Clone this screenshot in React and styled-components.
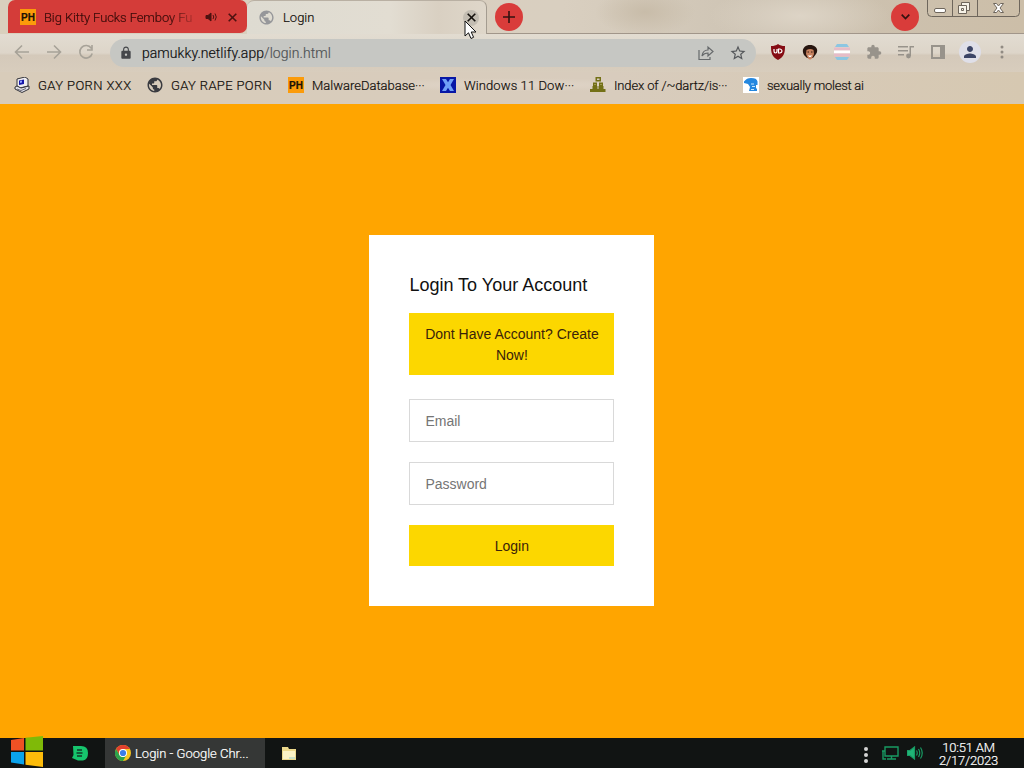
import React from 'react'
import styled, { createGlobalStyle } from 'styled-components';
import { MdLock, MdStarBorder, MdExtension, MdPerson, MdPublic } from 'react-icons/md';

const bookmarks = [
    { icon: 'pc', label: 'GAY PORN XXX', width: 133, spacing: 0.4 },
    { icon: 'globe', label: 'GAY RAPE PORN', width: 141, spacing: 0.35 },
    { icon: 'ph', label: 'MalwareDatabase···', width: 152, spacing: 0 },
    { icon: 'x', label: 'Windows 11 Dow···', width: 150, spacing: 0.1 },
    { icon: 'people', label: 'Index of /~dartz/is···', width: 153, spacing: -0.15 },
    { icon: 'blue', label: 'sexually molest ai', width: 140, spacing: -0.25 },
];

const PhIcon = () => (
    <PhBadge>PH</PhBadge>
)

const CloseIcon = () => (
    <svg width="9" height="9" viewBox="0 0 9 9" stroke="currentColor" strokeWidth="1.600">
        <path d="M.700.700l7.600 7.600M8.300.700L.700 8.300" />
    </svg>
)

const BookmarkIcon = ({ name }) => {
    if (name === 'ph') {
        return <PhIcon />
    }
    if (name === 'globe') {
        return <Globe size={18} color="#3a3b40" />
    }
    if (name === 'pc') {
        return (
            <svg width="16" height="16" viewBox="0 0 16 16">
                <path d="M3 2l8-2 3 2v7l-8 2-3-2z" fill="#eeedf0" stroke="#33333a" />
                <path d="M5 3.5l5-1v4.5l-5 1z" fill="#1717a8" />
                <path d="M6 4l2-.4v2L6 6z" fill="#8fa2ff" />
                <path d="M1 10l2-1 4 2 8-2v3l-7 3.5L1 12z" fill="#e2e1e8" stroke="#33333a" />
                <path d="M3 12l4 1.5 5-2" fill="none" stroke="#6a6a75" />
            </svg>
        )
    }
    if (name === 'x') {
        return (
            <svg width="16" height="16" viewBox="0 0 16 16">
                <path d="M0 0h16v16H0z" fill="#0717a6" />
                <path d="M2 2h4l2 3.200L10 2h4l-3.500 6 3.500 6h-4l-2-3.200L6 14H2l3.500-6z" fill="#6fa0f8" />
            </svg>
        )
    }
    if (name === 'people') {
        return (
            <svg width="16" height="16" viewBox="0 0 16 16" fill="#737016">
                <path d="M5.500 0H11v4.500H5.500z M7 1.500V3h2.500V1.500z" fillRule="evenodd" />
                <path d="M3 5.500h4V9h.5v3h1V9H9V5.500h4V9h.5v3h2v3H0v-3h2.500V9H3z" />
                <path d="M4.500 7h1v1h-1zM10.500 7h1v1h-1z" fill="#c9bf86" />
            </svg>
        )
    }
    return (
        <svg width="16" height="16" viewBox="0 0 16 16">
            <path d="M0 0h16v16H0z" fill="#fff" />
            <path d="M1 4.500C3 2 5 1 8 1c4 0 6 1 6.500 3.500V8H13v3l1 1v2H6l1-4-2-3-4-1z" fill="#2487df" />
            <path d="M8 6.500h3v1H8zM9 9h3v1H9zM8 12h3v1H8z" fill="#c7e8ff" />
        </svg>
    )
}

const Browser = () => (
    <Chrome>
        <TabStrip>
            <PlayingTab>
                <PhIcon />
                <PlayingTitle>Big Kitty Fucks Femboy Fu</PlayingTitle>
                <svg width="13" height="10" viewBox="0 0 13 10" fill="none" stroke="#4d1210">
                    <path d="M1 3.500h2L6 1v8L3 6.500H1z" fill="#4d1210" />
                    <path d="M8 3q1.500 2 0 4M10 1.500q2.500 3.500 0 7" />
                </svg>
                <CloseSlot><CloseIcon /></CloseSlot>
            </PlayingTab>
            <ActiveTab>
                <MdPublic size={17} color="#96979a" />
                <TabTitle>Login</TabTitle>
                <TabClose>
                    <CloseIcon />
                    <Cursor width="13" height="20" viewBox="0 0 13 20">
                        <path d="M1 1v15l3.500-3.200L7 18.500l2.600-1.200L7.200 12H12z" fill="#fff" stroke="#111" />
                    </Cursor>
                </TabClose>
            </ActiveTab>
            <StripRest>
                <RoundButton>
                    <svg width="12" height="12" viewBox="0 0 12 12" stroke="currentColor" strokeWidth="1.600">
                        <path d="M6 0v12M0 6h12" />
                    </svg>
                </RoundButton>
                <Spacer />
                <RoundButton>
                    <svg width="9" height="6" viewBox="0 0 9 6" fill="none" stroke="currentColor" strokeWidth="1.700">
                        <path d="M.700.700l3.800 3.800L8.300.700" />
                    </svg>
                </RoundButton>
                <WindowButtons>
                    <svg width="93" height="17" viewBox="0 0 93 17" fill="none" stroke="#6e665c">
                        <path d="M.5 0v12.500q0 4 4 4h84q4 0 4-4V0M25.500 0v16M50.500 0v16" />
                        <rect x="7.500" y="8.500" width="11" height="4" rx="1.500" fill="#fff" />
                        <path d="M34.500 2.500h8v8h-8z" fill="#f6f2e8" />
                        <path d="M31.500 5.500h8v8h-8z" fill="#f6f2e8" />
                        <path d="M34.500 8.500h2v2h-2z" />
                        <path d="M66.500 3.500h3l2 2.500 2-2.500h3l-3.500 4.500 3.500 4.500h-3l-2-2.500-2 2.500h-3L70 8z" fill="#fff" />
                    </svg>
                </WindowButtons>
            </StripRest>
        </TabStrip>
        <Toolbar>
            <NavIcon viewBox="0 0 16 16"><path d="M15 8H2M8 1.500L1.500 8 8 14.500" /></NavIcon>
            <NavIcon viewBox="0 0 16 16"><path d="M1 8h13M8 1.500L14.500 8 8 14.500" /></NavIcon>
            <NavIcon viewBox="0 0 16 16"><path d="M13.300 4.200A6.300 6.300 0 1 0 14.200 9.500M14 1v5H9" /></NavIcon>
            <AddressBar>
                <MdLock size={14} color="#45474a" />
                <Url>pamukky.netlify.app<span>/login.html</span></Url>
                <Spacer />
                <svg width="16" height="16" viewBox="0 0 16 16" fill="none" stroke="#66696b" strokeWidth="1.200">
                    <path d="M1 5v9.500h11V12" />
                    <path d="M4 11c.500-4 2.500-6 6-6V2l5 4.500-5 4.500V8c-3 0-4.500.800-6 3z" />
                </svg>
                <MdStarBorder size={18} color="#55585b" />
            </AddressBar>
            <Extensions>
                <svg width="16" height="16" viewBox="0 0 16 16">
                    <path d="M8 0c2 1.500 4 2 7 2 0 7-1 11-7 14C2 13 1 9 1 2c3 0 5-.500 7-2z" fill="#850c14" />
                    <path d="M4 5v2q0 2 1.500 2T7 7V5M8.500 5v4h1.500q2-.500 2-2t-2-2z" fill="none" stroke="#fff" strokeWidth="1.200" />
                </svg>
                <svg width="16" height="16" viewBox="0 0 16 16">
                    <path d="M2 11C-1 6 2 1 8 1s9 5 6 9l-3 4H5z" fill="#27150f" />
                    <path d="M4.500 6q4-2 7 0l.500 4-2 4.500q-2 2-4 0L4 10z" fill="#c78260" />
                    <path d="M5.500 8H7M9 8h1.500" stroke="#3b1c13" />
                    <path d="M6 11q2 1 4 0l-1 2H7z" fill="#fff" />
                </svg>
                <svg width="16" height="16" viewBox="0 0 16 16">
                    <path d="M3 0h10l2 3H1z" fill="#8cc6e2" />
                    <path d="M0 3.500h16v3H0z" fill="#e6bcc8" />
                    <path d="M0 6.500h16v3H0z" fill="#fff" />
                    <path d="M0 9.500h16v3H0z" fill="#e6bcc8" />
                    <path d="M1 13h14l-2 3H3z" fill="#8cc6e2" />
                </svg>
                <MdExtension size={16} color="#98938b" />
                <svg width="16" height="14" viewBox="0 0 16 14" fill="#98938b">
                    <path d="M0 1h10v1.500H0zM0 5h10v1.500H0zM0 9h6v1.500H0zM11.500 1H16v1.500h-3V11h-1.500z" />
                    <circle cx="10.500" cy="11" r="2.400" />
                </svg>
                <svg width="16" height="14" viewBox="0 0 16 14" fill="#98938b">
                    <path d="M1 0h14v14H1zM3 2v10h7V2z" fillRule="evenodd" />
                </svg>
                <Avatar><MdPerson size={18} /></Avatar>
                <svg width="16" height="14" viewBox="0 0 16 14" fill="#918b83">
                    <circle cx="8" cy="2" r="1.500" /><circle cx="8" cy="7" r="1.500" /><circle cx="8" cy="12" r="1.500" />
                </svg>
            </Extensions>
        </Toolbar>
        <Bookmarks>
            {bookmarks.map((item) => (
                <Bookmark key={item.label} $width={item.width} $spacing={item.spacing}>
                    <BookmarkIcon name={item.icon} />
                    <span>{item.label}</span>
                </Bookmark>
            ))}
        </Bookmarks>
    </Chrome>
)

const LoginForm = () => (
    <Form onSubmit={(e) => e.preventDefault()}>
        <h1>Login To Your Account</h1>
        <Button type="button" $tall>Dont Have Account? Create Now!</Button>
        <input type="email" placeholder="Email" />
        <input type="password" placeholder="Password" />
        <Button type="submit">Login</Button>
    </Form>
)

const Taskbar = () => (
    <Bar>
        <Start viewBox="0 0 32 31">
            <path d="M0 4l13-2v12.500H0z" fill="#ef5124" />
            <path d="M14.500 1.800L32 0v14.500H14.500z" fill="#7fba08" />
            <path d="M0 16h13v12.500L0 26.500z" fill="#0ba3ec" />
            <path d="M14.500 16H32v15l-17.500-2.200z" fill="#fdbc0a" />
        </Start>
        <Pinned>
            <svg width="16" height="15" viewBox="0 0 16 15">
                <path d="M1 0h8q7 0 7 7t-5 7.500H6L0 12l1.500-3z" fill="#16c56d" />
                <path d="M5 4h5M4.500 7h6M5 10h5" stroke="#123a27" strokeWidth="1.300" />
            </svg>
        </Pinned>
        <Task>
            <svg width="16" height="16" viewBox="0 0 16 16">
                <circle cx="8" cy="8" r="8" fill="#f7c51e" />
                <path d="M1.070 4A8 8 0 0 1 14.930 4H8a4 4 0 0 0-3.500 6z" fill="#e2402e" />
                <path d="M1.070 4A8 8 0 0 0 8 16l3.500-6a4 4 0 0 1-7 0z" fill="#2ba24c" />
                <circle cx="8" cy="8" r="4" fill="#fff" />
                <circle cx="8" cy="8" r="3.100" fill="#3b7de9" />
            </svg>
            <span>Login - Google Chr...</span>
        </Task>
        <Folder width="14" height="13" viewBox="0 0 14 13">
            <path d="M0 0h6l1 2h7v11H0z" fill="#ecd98c" />
            <path d="M1 4h12v8H1z" fill="#fbf3c7" />
            <path d="M7 10h6v2H7z" fill="#c9e0c8" />
        </Folder>
        <Spacer />
        <Tray>
            <svg width="4" height="18" viewBox="0 0 4 18" fill="#d4d4d4">
                <circle cx="2" cy="3" r="2" /><circle cx="2" cy="9" r="2" /><circle cx="2" cy="15" r="2" />
            </svg>
            <svg width="17" height="14" viewBox="0 0 17 14" fill="none" stroke="#189a63" strokeWidth="1.400">
                <path d="M3 1h13v9H3zM9.500 10v3M5 13h9M0 5h3M1 5v8h3" />
            </svg>
            <svg width="16" height="14" viewBox="0 0 16 14" fill="none" stroke="#189a63" strokeWidth="1.200">
                <path d="M0 4.500h3L7.500 1v12L3 9.500H0z" fill="#20b477" />
                <path d="M9.500 4.500q1.500 2.500 0 5M11.500 3q2.500 4 0 8M13.500 1.500q3.500 5.500 0 11" />
            </svg>
        </Tray>
        <Clock>
            <div>10:51 AM</div>
            <div>2/17/2023</div>
        </Clock>
    </Bar>
)

const App = () => {
    return (
        <Screen>
            <GlobalStyle />
            <Browser />
            <Page>
                <LoginForm />
            </Page>
            <Taskbar />
        </Screen>
    )
}

export default App;

const GlobalStyle = createGlobalStyle`
    body {
        margin: 0;
        overflow: hidden;
    }
    * {
        box-sizing: border-box;
    }
    svg {
        flex-shrink: 0;
        display: block;
    }
`;

const Screen = styled.div`
    width: 1024px;
    height: 768px;
    display: flex;
    flex-direction: column;
    font-family: Roboto, sans-serif;
    font-size: 13px;
    font-weight: 300;
    color: #14100c;
`;

const Chrome = styled.div`
    height: 104px;
    flex-shrink: 0;
    background: #d8ccbb;
    -webkit-text-stroke: 0.2px;
`;

const TabStrip = styled.div`
    height: 34px;
    display: flex;
    padding-left: 8px;
    background:
        radial-gradient(ellipse 50px 24px at 645px 12px, #c8bca9, transparent),
        radial-gradient(ellipse 90px 30px at 800px 16px, #ddd4c6, transparent),
        linear-gradient(90deg, #d9d0bd, #d9cfc0 55%, #cdc3b3 75%, #ccbea8);
`;

const PlayingTab = styled.div`
    width: 239px;
    height: 33px;
    padding: 1px 10px 0 12px;
    display: flex;
    align-items: center;
    border-radius: 7px 7px 7px 0;
    background: #d43c39;
    color: #4d1210;
`;

const PhBadge = styled.span`
    width: 16px;
    height: 16px;
    flex-shrink: 0;
    background: #fb9b0a;
    color: #1b1206;
    font: bold 10px/17px "Liberation Sans", sans-serif;
    text-align: center;
    letter-spacing: 0;
`;

const PlayingTitle = styled.span`
    width: 153px;
    margin: 0 8px;
    overflow: hidden;
    white-space: nowrap;
    letter-spacing: -0.1px;
    color: #3a0c0a;
    mask-image: linear-gradient(90deg, #000 82%, rgba(0, 0, 0, 0.1));
`;

const CloseSlot = styled.span`
    margin-left: auto;
`;

const ActiveTab = styled.div`
    width: 240px;
    height: 34px;
    padding: 0 7px 0 11px;
    display: flex;
    align-items: center;
    border-top: 1px solid #b9b0a3;
    border-right: 1px solid #a49c90;
    border-radius: 7px 7px 0 0;
    background: linear-gradient(90deg, #dedbd1, #e2ddd2 60%, #d9d0c2 80%, #dfd7ca);
`;

const TabTitle = styled.span`
    flex: 1;
    margin-left: 8px;
    letter-spacing: 0;
`;

const TabClose = styled.span`
    position: relative;
    width: 16px;
    height: 16px;
    display: flex;
    align-items: center;
    justify-content: center;
    border-radius: 50%;
    background: #c2bcb1;
`;

const Cursor = styled.svg`
    position: absolute;
    left: 1px;
    top: 10px;
`;

const StripRest = styled.div`
    flex: 1;
    height: 34px;
    padding: 0 4px 0 8px;
    display: flex;
    align-items: center;
    border-bottom: 1px solid #a1968a;
`;

const RoundButton = styled.span`
    width: 28px;
    height: 28px;
    display: flex;
    align-items: center;
    justify-content: center;
    border-radius: 50%;
    background: #d93c3a;
    color: #331210;
`;

const WindowButtons = styled.div`
    align-self: flex-start;
    margin-left: 8px;
`;

const Spacer = styled.div`
    flex: 1;
`;

const Toolbar = styled.div`
    height: 38px;
    padding: 0 14px 2px 14px;
    display: flex;
    align-items: center;
    background: linear-gradient(#e2dcd1, #ddd5c9 50%, #d4c9ba 56%, #d8cdbd);
`;

const NavIcon = styled.svg`
    width: 16px;
    height: 16px;
    margin-right: 16px;
    fill: none;
    stroke: #a7a298;
    stroke-width: 1.6;
`;

const AddressBar = styled.div`
    width: 646px;
    height: 28px;
    margin-top: 2px;
    padding: 0 9px 0 9px;
    display: flex;
    align-items: center;
    gap: 9px;
    border-radius: 14px;
    background: #c6c7c3;
    & svg:last-child {
        margin-left: 6px;
    }
`;

const Url = styled.span`
    font-size: 14px;
    line-height: 18px;
    letter-spacing: 0.05px;
    color: #101011;
    & span {
        color: #505355;
    }
`;

const Extensions = styled.div`
    flex: 1;
    margin-left: 14px;
    display: flex;
    align-items: center;
    justify-content: space-between;
`;

const Avatar = styled.span`
    width: 22px;
    height: 22px;
    margin: 0 -3px;
    display: flex;
    align-items: center;
    justify-content: center;
    border-radius: 50%;
    background: #dfdfe8;
    color: #3c4567;
`;

const Bookmarks = styled.div`
    height: 32px;
    padding: 0 0 6px 14px;
    display: flex;
    align-items: center;
    background:
        radial-gradient(ellipse at 50% 40%, #e0d5c8 0, transparent 25%),
        linear-gradient(90deg, #d8ccba, #d8ccbd 60%, #d6c8b1);
`;

const Globe = styled(MdPublic)`
    margin: -1px;
`;

const Bookmark = styled.div`
    width: ${(props) => props.$width}px;
    display: flex;
    align-items: center;
    gap: 8px;
    white-space: nowrap;
    letter-spacing: ${(props) => props.$spacing}px;
`;

const Page = styled.div`
    flex: 1;
    display: flex;
    align-items: flex-start;
    justify-content: center;
    padding: 131px 0.2px 0 0;
    background: #ffa500;
`;

const Form = styled.form`
    width: 285px;
    height: 371px;
    padding: 41px 40px 40px;
    background: #fff;
    font-family: "Liberation Sans", Arial, sans-serif;
    & h1 {
        margin: 0 0 19px;
        font-size: 18px;
        line-height: 18px;
        font-weight: 400;
        color: #111;
        white-space: nowrap;
    }
    & input {
        display: block;
        width: 100%;
        height: 43px;
        margin-bottom: 20px;
        padding: 1px 15px 0;
        border: 1px solid #d9d9d9;
        border-radius: 0;
        font: 14px "Liberation Sans", Arial, sans-serif;
        outline: none;
        &::placeholder {
            color: #757575;
        }
    }
`;

const Button = styled.button`
    display: block;
    width: 100%;
    height: ${(props) => (props.$tall ? '62px' : '41px')};
    margin-bottom: ${(props) => (props.$tall ? '24px' : '0')};
    padding: 2px 15px 0;
    border: none;
    background: #fcd700;
    color: #3a230a;
    font: 14px/21px "Liberation Sans", Arial, sans-serif;
    cursor: pointer;
`;

const Bar = styled.div`
    height: 30px;
    flex-shrink: 0;
    display: flex;
    align-items: center;
    background: #111413;
    color: #fff;
    -webkit-text-stroke: 0.2px;
`;

const Start = styled.svg`
    width: 32px;
    height: 31px;
    margin: -3px 0 0 11px;
`;

const Pinned = styled.div`
    width: 62px;
    padding-left: 29px;
`;

const Task = styled.div`
    width: 160px;
    height: 30px;
    padding-left: 10px;
    display: flex;
    align-items: center;
    gap: 4px;
    white-space: nowrap;
    background: #353736;
`;

const Folder = styled.svg`
    margin-left: 17px;
`;

const Tray = styled.div`
    display: flex;
    align-items: center;
    gap: 8px;
    & svg:first-child {
        margin: 3px 6px 0 0;
    }
`;

const Clock = styled.div`
    width: 101px;
    padding: 1px 10px 0 0;
    line-height: 13px;
    text-align: center;
    letter-spacing: -0.2px;
`;
